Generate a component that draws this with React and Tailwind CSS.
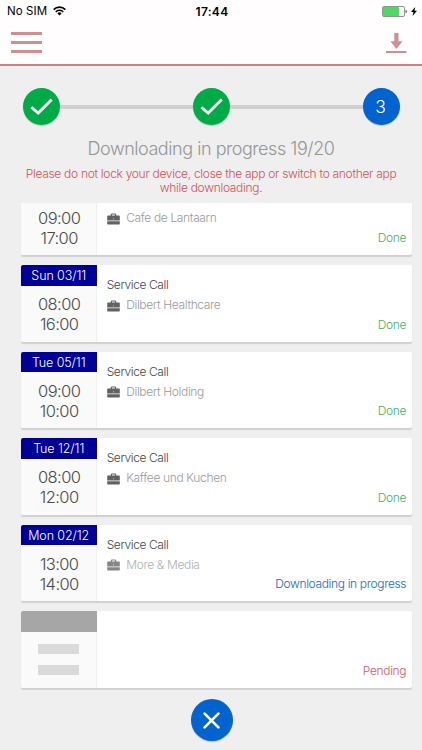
import React from 'react';
import clsx from 'clsx';

const visits = [
  { id: 1, start: '09:00', end: '17:00', customer: 'Cafe de Lantaarn', status: 'done', clipped: true },
  { id: 2, date: 'Sun 03/11', start: '08:00', end: '16:00', customer: 'Dilbert Healthcare', status: 'done' },
  { id: 3, date: 'Tue 05/11', start: '09:00', end: '10:00', customer: 'Dilbert Holding', status: 'done' },
  { id: 4, date: 'Tue 12/11', start: '08:00', end: '12:00', customer: 'Kaffee und Kuchen', status: 'done' },
  { id: 5, date: 'Mon 02/12', start: '13:00', end: '14:00', customer: 'More & Media', status: 'loading' },
  { id: 6, status: 'pending' },
];

const statuses = {
  done: { label: 'Done', color: 'text-[#45b05f]' },
  loading: { label: 'Downloading in progress', color: 'text-[#1a68bd]' },
  pending: { label: 'Pending', color: 'text-[#d95560]' },
};

function StatusBar() {
  return (
    <div className="grid h-[21px] grid-cols-3 items-center pl-[7px] pr-[5px] text-xs leading-[21px] text-black">
      <div className="flex items-center gap-[6px]">
        <span className="pt-px text-[11.5px] tracking-[0.1px]">No SIM</span>
        <svg width="13" height="10" viewBox="0 0 13 10" fill="none" stroke="black" strokeWidth="1.7">
          <path d="M0.7 3.6a8.2 8.2 0 0 1 11.6 0" />
          <path d="M2.8 5.8a5.2 5.2 0 0 1 7.4 0" />
          <path d="M6.5 9.6L4.4 7.4a3 3 0 0 1 4.2 0z" fill="black" stroke="none" />
        </svg>
      </div>
      <span className="text-center font-semibold tracking-[0.3px]">17:44</span>
      <div className="flex items-center justify-end gap-[3px]">
        <svg width="26" height="11" viewBox="0 0 26 11">
          <rect x="0.5" y="0.5" width="22" height="10" rx="1.5" fill="white" stroke="#777" strokeWidth="0.8" />
          <rect x="1" y="1" width="16" height="9" rx="0.8" fill="#4cd964" />
          <path d="M23.6 3.8c1.6.4 1.6 3 0 3.4z" fill="#333" />
        </svg>
        <svg width="6" height="9" viewBox="0 0 6 9">
          <path d="M4.2 0L0 5h2.4L1.6 9L6 3.7H3.5z" fill="black" />
        </svg>
      </div>
    </div>
  );
}

function Header() {
  return (
    <header className="h-[66px] border-b-2 border-[#cb8085] bg-[#fffdfd]">
      <StatusBar />
      <div className="flex items-start justify-between pl-[10.5px] pr-[15.5px] pt-[11px]">
        <div className="flex flex-col gap-[6.2px]">
          <span className="h-[3px] w-[31px] bg-[#cf8e90]" />
          <span className="h-[3px] w-[31px] bg-[#cf8e90]" />
          <span className="h-[3px] w-[31px] bg-[#cf8e90]" />
        </div>
        <svg width="21" height="22" viewBox="0 0 21 22" fill="#cf8e90">
          <path d="M8.3 1h4.2v8.2h4L10.4 17L4.4 9.2h3.9z" />
          <rect x="0" y="19" width="20.5" height="2" />
        </svg>
      </div>
    </header>
  );
}

function Step({ number, complete }) {
  return (
    <div
      className={clsx(
        'flex size-[37px] shrink-0 items-center justify-center rounded-full shadow-[0_1px_1px_rgba(0,0,0,0.2)]',
        complete ? 'bg-[#00aa46]' : 'bg-[#0063ce]'
      )}
    >
      {complete ? (
        <svg width="23" height="18" viewBox="0 0 23 18" fill="none" stroke="white" strokeWidth="2.8">
          <path d="M1.3 9.2L8.2 15L21.7 1.5" />
        </svg>
      ) : (
        <span className="pr-px pt-px text-[17.5px] font-light text-white">{number}</span>
      )}
    </div>
  );
}

function Steps() {
  return (
    <div className="flex items-center px-[22.5px] pt-[22px]">
      <Step number={1} complete />
      <div className="h-1 flex-1 bg-[#d0d0d0]" />
      <Step number={2} complete />
      <div className="h-1 flex-1 bg-[#d0d0d0]" />
      <Step number={3} />
    </div>
  );
}

function Briefcase({ faded }) {
  return (
    <svg width="13" height="12" viewBox="0 0 13 12" fill={faded ? '#858585' : '#626262'}>
      <path d="M3.8 2.6V1.2L4.6.4h3.8l.8.8v1.4h2.9q.7 0 .7.7v4.3H.2V3.3q0-.7.7-.7zM5 2.6h3V1.5H5zM6.1 5.6v.6h.8v-.6z" fillRule="evenodd" />
      <path d="M.2 8.2h12.6v2.6q0 .6-.7.6H.9q-.7 0-.7-.6z" />
    </svg>
  );
}

function VisitCard({ visit }) {
  const status = statuses[visit.status];
  const empty = visit.status === 'pending';

  return (
    <div
      className={clsx(
        'flex shrink-0 overflow-hidden bg-white shadow-[0_1.5px_1px_rgba(0,0,0,0.13)]',
        visit.clipped ? 'h-[52px] rounded-b-[2px]' : 'h-[76.6px] rounded-[2px]'
      )}
    >
      <div className="w-[76px] border-r border-[#f0f0f0] bg-[#fafafa] text-center font-light">
        {!visit.clipped && (
          <div
            className={clsx(
              '-mr-px h-[20.5px] text-[12.5px] leading-[21px] tracking-[-0.1px] text-white',
              empty ? 'bg-[#a6a6a6]' : 'bg-[#000096]'
            )}
          >
            {visit.date}
          </div>
        )}
        {empty ? (
          <div className="flex flex-col items-center gap-[11px] pl-px pt-[12px]">
            <span className="h-[10px] w-[41px] bg-[#dadada]" />
            <span className="h-[10px] w-[41px] bg-[#dadada]" />
          </div>
        ) : (
          <div
            className={clsx(
              'pl-[2px] text-[16.5px] leading-[20.2px] tracking-[-0.6px] text-[#4a4a4a]',
              visit.clipped ? 'pt-[5px]' : 'pt-[8.6px]'
            )}
          >
            <div>{visit.start}</div>
            <div>{visit.end}</div>
          </div>
        )}
      </div>

      <div className="flex flex-1 flex-col pl-[10px] pr-[5.5px] text-[12px] font-light">
        {!empty && (
          <div className={visit.clipped ? 'pt-[5px]' : 'pt-[10px]'}>
            {!visit.clipped && (
              <div className="pb-px leading-[19px] tracking-[-0.4px] text-[#444]">Service Call</div>
            )}
            <div className="flex items-center gap-[6.5px] leading-[19px]">
              <span className="pt-[2px]"><Briefcase faded={visit.status === 'loading'} /></span>
              <span className={clsx('tracking-[-0.35px]', visit.status === 'loading' ? 'text-[#b0b0b0]' : 'text-[#9a9a9a]')}>
                {visit.customer}
              </span>
            </div>
          </div>
        )}
        <div className={clsx('mt-auto pb-[7px] text-right leading-[20px] tracking-[-0.35px]', status.color)}>{status.label}</div>
      </div>
    </div>
  );
}

export default function App() {
  return (
    <div className="flex h-[750px] w-[422px] flex-col overflow-hidden bg-[#efefef] font-[Inter,'Liberation_Sans',sans-serif]">
      <Header />
      <Steps />

      <div className="pt-[12px] text-center font-light">
        <h1 className="text-[18px] leading-[24px] tracking-[-0.45px] text-[#959595]">Downloading in progress 19/20</h1>
        <p className="pt-[6px] text-[12px] leading-[14px] tracking-[-0.3px] text-[#d64f58]">
          Please do not lock your device, close the app or switch to another app
          <br />
          while downloading.
        </p>
      </div>

      <div className="mt-[8px] flex h-[487px] flex-col gap-[10px] overflow-hidden pl-[20.7px] pr-[10.3px]">
        {visits.map((visit) => (
          <VisitCard key={visit.id} visit={visit} />
        ))}
      </div>

      <div className="flex justify-center pl-px pt-[9px]">
        <button className="flex size-[42px] items-center justify-center rounded-full bg-[#0063ce] shadow-[0_1px_1px_rgba(0,0,0,0.2)]">
          <svg width="17" height="17" viewBox="0 0 17 17" stroke="white" strokeWidth="2.7" strokeLinecap="round">
            <path d="M1.6 1.6L15.4 15.4M15.4 1.6L1.6 15.4" />
          </svg>
        </button>
      </div>
    </div>
  );
}
